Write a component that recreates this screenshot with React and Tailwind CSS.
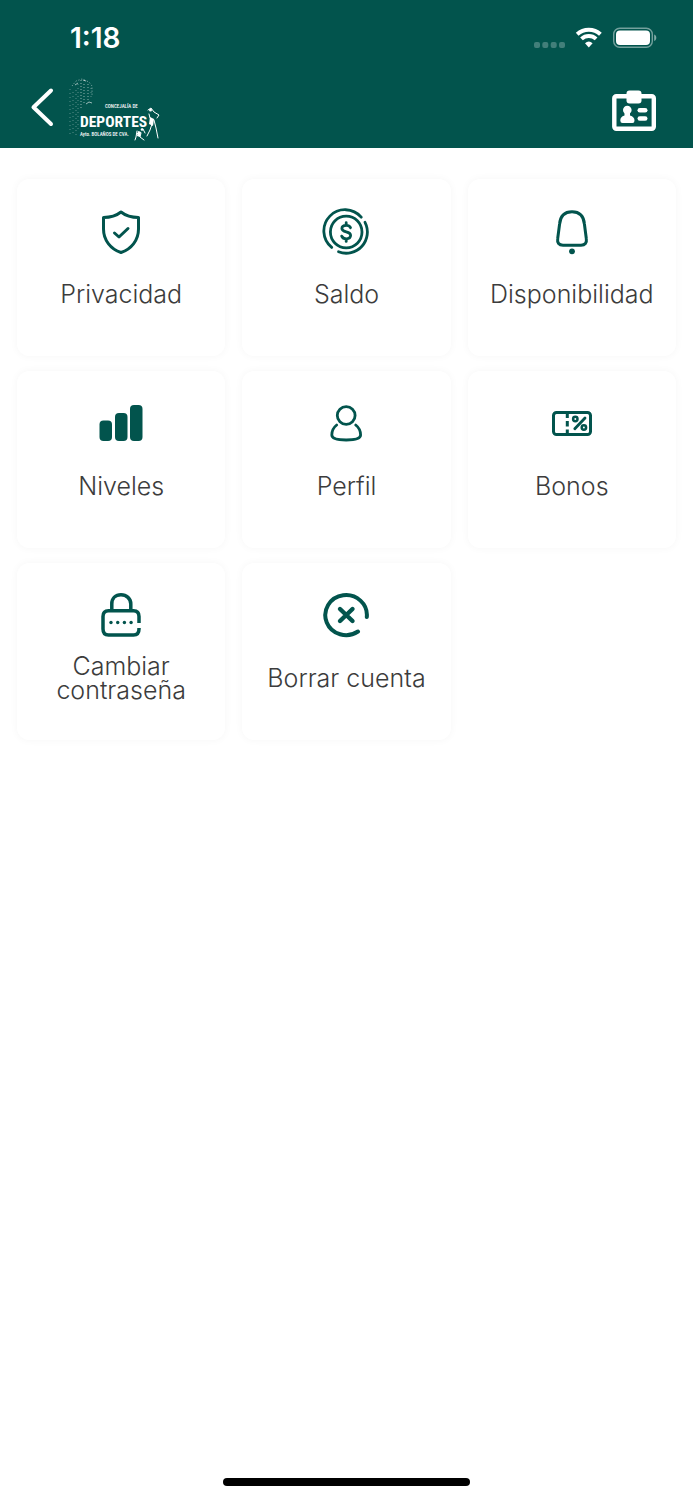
import React from "react";

const line = {
  fill: "none",
  stroke: "currentColor",
  strokeLinecap: "round",
  strokeLinejoin: "round",
  strokeWidth: 3,
};

function Icon({ children }) {
  return (
    <svg viewBox="0 0 48 48" className="size-12 shrink-0 text-[#02544d]" aria-hidden="true">
      {children}
    </svg>
  );
}

const items = [
  {
    label: "Privacidad",
    icon: (
      <g {...line}>
        <path d="M24 4C19 8 13 9.500 6.500 9.500V21C6.500 32 13.500 41 24 44.500C34.500 41 41.500 32 41.500 21V9.500C35 9.500 29 8 24 4Z" />
        <path d="M17.500 25L22 29L31 20.500" />
      </g>
    ),
  },
  {
    label: "Saldo",
    icon: (
      <g {...line} strokeWidth="2.800">
        <circle cx="24.200" cy="24" r="15.800" />
        <path d="M39.200 9.200A21.200 21.200 0 1 0 9.700 39.400" />
        <path d="M43 14.300A21.200 21.200 0 0 1 16.500 43.800" />
        <path d="M28.500 19.700C27.700 18 26.200 17.400 24.200 17.400C21.700 17.400 19.900 18.700 19.900 20.600C19.900 25.200 28.600 22.600 28.600 27.300C28.600 29.600 26.700 30.800 24.200 30.800C21.900 30.800 20.400 29.800 19.700 28.100M24.200 14.700V17M24.200 31V33.400" />
      </g>
    ),
  },
  {
    label: "Disponibilidad",
    icon: (
      <>
        <path {...line} d="M24 3.800C16.500 3.800 12.300 8.500 11.600 16L9.700 30.500C9 35 11 37.200 15 37.200H33C37 37.200 39 35 38.300 30.500L36.400 16C35.700 8.500 31.500 3.800 24 3.800Z" />
        <circle cx="24" cy="43.300" r="2.900" fill="currentColor" />
      </>
    ),
  },
  {
    label: "Niveles",
    icon: (
      <g fill="currentColor">
        <rect x="2.500" y="20.500" width="12.500" height="20.500" rx="4" />
        <rect x="18" y="13" width="12.500" height="28" rx="4" />
        <rect x="33" y="5" width="12.500" height="36" rx="4" />
      </g>
    ),
  },
  {
    label: "Perfil",
    icon: (
      <g {...line} strokeWidth="2.800">
        <circle cx="24.200" cy="15.500" r="8.900" />
        <path d="M14.700 25C11.500 27.500 9.800 32 9.800 35C9.800 38.500 15 40 24.200 40S38.600 38.500 38.600 35C38.600 32 36.900 27.500 33.700 25" />
      </g>
    ),
  },
  {
    label: "Bonos",
    icon: (
      <g {...line}>
        <rect x="5.500" y="12.500" width="37" height="22" rx="3" />
        <path strokeLinecap="butt" d="M19.300 12.500V18M19.300 21V26.500M19.300 29.500V34.500" />
        <path d="M26.800 28.800L37 18" strokeWidth="2.800" />
        <circle cx="27.300" cy="19" r="2.200" strokeWidth="2.500" />
        <circle cx="35.900" cy="27.500" r="2.200" strokeWidth="2.500" />
      </g>
    ),
  },
  {
    label: "Cambiar contraseña",
    icon: (
      <g transform="translate(0 -1.500)">
        <g {...line} strokeWidth="3.500" strokeLinecap="butt">
          <path d="M14.800 20V13.500C14.800 8 18.500 4.300 24 4.300S33.800 8 33.800 13.500V20" />
          <path d="M42 32.500V26C42 22 40 20.200 36.500 20.200H11.500C8 20.200 6 22 6 26V38.500C6 42.500 8 44.500 11.500 44.500H36.500C40 44.500 42 42.500 42 38.500V37.500" />
        </g>
        <g fill="currentColor">
          <circle cx="14" cy="32" r="1.700" />
          <circle cx="20.700" cy="32" r="1.700" />
          <circle cx="27.400" cy="32" r="1.700" />
          <circle cx="34.100" cy="32" r="1.700" />
        </g>
      </g>
    ),
  },
  {
    label: "Borrar cuenta",
    icon: (
      <g {...line} strokeWidth="4" transform="translate(0 -1)">
        <path d="M44.800 26A20.800 20 0 1 0 36 40.500" />
        <path d="M18 18L30.500 30M30.500 18L18 30" strokeWidth="4.400" />
      </g>
    ),
  },
];

function ClubLogo() {
  return (
    <svg viewBox="0 0 100 68" className="h-[68px] w-[100px]" role="img" aria-label="Concejalía de Deportes">
      <g fill="none" stroke="#fff" strokeWidth="1">
        <path opacity="0.550" strokeDasharray="1 2" d="M8 10L12 5L18 3L25 6L28 10V20M17 4V32M20 8V28M24 8V24" />
        <path opacity="0.350" strokeDasharray="1 3" d="M6 13V60M9 16V58M12 14V60M14 8V55M27 12V22" />
        <path opacity="0.600" d="M22 28L25 26L28 27M11 9L14 7M19 4L22 5" />
      </g>
      <g fill="#fff" fontFamily="'Liberation Sans Narrow', 'Roboto Condensed', Roboto, sans-serif">
        <text x="41" y="32" fontSize="5" fontWeight="500">CONCEJALÍA DE</text>
        <text x="16" y="51" fontSize="15.500" fontWeight="700">DEPORTES</text>
        <text x="16" y="60" fontSize="5" fontWeight="500">Ayto. BOLAÑOS DE CVA.</text>
      </g>
      <g fill="none" stroke="#fff" strokeWidth="1" strokeLinecap="round" strokeLinejoin="round">
        <path d="M84 34L87 32L90 36L95 39L93 42M90 44L92 52L94 62M88 48L86 54L83 60M85 38L86 42" />
        <path d="M73 55L72 61L71 64M77 57L76 61L80 64M79 53L81 57M75 56L73 58" />
      </g>
      <g fill="#fff">
        <circle cx="86.500" cy="34" r="1.500" />
        <circle cx="78" cy="53.500" r="1.300" />
        <path d="M86 41L90 43L89 50L85 48Z" />
        <path d="M74 55L77 56L76 61L73 60Z" />
      </g>
    </svg>
  );
}

function StatusBar() {
  return (
    <div className="flex h-[76px] items-center justify-between pl-[70px] pr-9 text-white">
      <time className="font-['Inter','Liberation_Sans',sans-serif] text-[28px] font-semibold leading-8">1:18</time>
      <svg viewBox="0 0 126 28" className="h-7 w-[126px]" aria-hidden="true">
        <g fill="#fff" opacity="0.250">
          <rect x="3" y="18" width="6" height="6" rx="2" />
          <rect x="11.300" y="18" width="6" height="6" rx="2" />
          <rect x="19.700" y="18" width="6" height="6" rx="2" />
          <rect x="28" y="18" width="6" height="6" rx="2" />
        </g>
        <g fill="none" stroke="#fff" strokeWidth="4">
          <path d="M46.200 10.300A17 17 0 0 1 69.400 10.300" />
          <path d="M50.500 14.900A10.700 10.700 0 0 1 65.100 14.900" />
        </g>
        <path fill="#fff" d="M54 19.200A5.700 5.700 0 0 1 61.600 19.200L57.800 23.500Z" />
        <rect x="82.700" y="4.200" width="38.600" height="19" rx="6" fill="none" stroke="#fff" strokeWidth="1.400" opacity="0.450" />
        <rect x="85" y="6.500" width="34" height="14.500" rx="4" fill="#fff" />
        <path fill="#fff" opacity="0.500" d="M123.200 10.500C126 11.500 126 16 123.200 17Z" />
      </svg>
    </div>
  );
}

export default function App() {
  return (
    <div className="flex min-h-screen flex-col bg-white">
      <header className="bg-[#02544d]">
        <StatusBar />
        <div className="flex h-[72px] items-start pl-7 pr-9">
          <button type="button" aria-label="Atrás" className="h-[62px] w-9">
            <svg viewBox="0 0 36 62" className="h-[62px] w-9" aria-hidden="true">
              <path d="M23 14.500L5.500 31.300L23 48" fill="none" stroke="#fff" strokeWidth="4" strokeLinecap="round" strokeLinejoin="round" />
            </svg>
          </button>
          <ClubLogo />
          <button type="button" aria-label="Carné" className="ml-auto h-[68px] w-[46px]">
            <svg viewBox="0 0 46 68" className="h-[68px] w-[46px]" aria-hidden="true">
              <rect x="3.300" y="20.300" width="39.500" height="32.500" rx="2" fill="none" stroke="#fff" strokeWidth="4.400" />
              <rect x="15.500" y="14.500" width="15" height="13" rx="3" fill="#fff" />
              <g fill="#fff">
                <circle cx="16.300" cy="34" r="4.300" />
                <path d="M13.500 35H19V39.500C22 40.500 23.500 42 23.500 44.500Q23.500 47 21.500 47H11.500Q9.300 47 9.300 44.500C9.300 42 10.500 40.500 13.500 39.500Z" />
                <rect x="26.500" y="32" width="10" height="4.600" rx="2.300" />
                <rect x="26.500" y="40.200" width="10" height="4.600" rx="2.300" />
              </g>
            </svg>
          </button>
        </div>
      </header>

      <main className="grid grid-cols-3 gap-x-[17px] gap-y-[15px] px-[17px] pt-[31px]">
        {items.map((item) => (
          <button
            key={item.label}
            type="button"
            className="flex flex-col items-center rounded-xl bg-white pt-[29px] pb-[38px] shadow-[0_0_8px_rgba(0,0,0,0.04)]"
          >
            <Icon>{item.icon}</Icon>
            <span className="mt-[14px] flex h-12 max-w-44 items-center text-center font-['Inter','Liberation_Sans',sans-serif] text-[25px] leading-6 font-light text-[#3c3c3c]">
              {item.label}
            </span>
          </button>
        ))}
      </main>

      <div className="mt-auto flex justify-center pb-[14px]">
        <div className="h-2 w-[247px] rounded-full bg-black" />
      </div>
    </div>
  );
}
